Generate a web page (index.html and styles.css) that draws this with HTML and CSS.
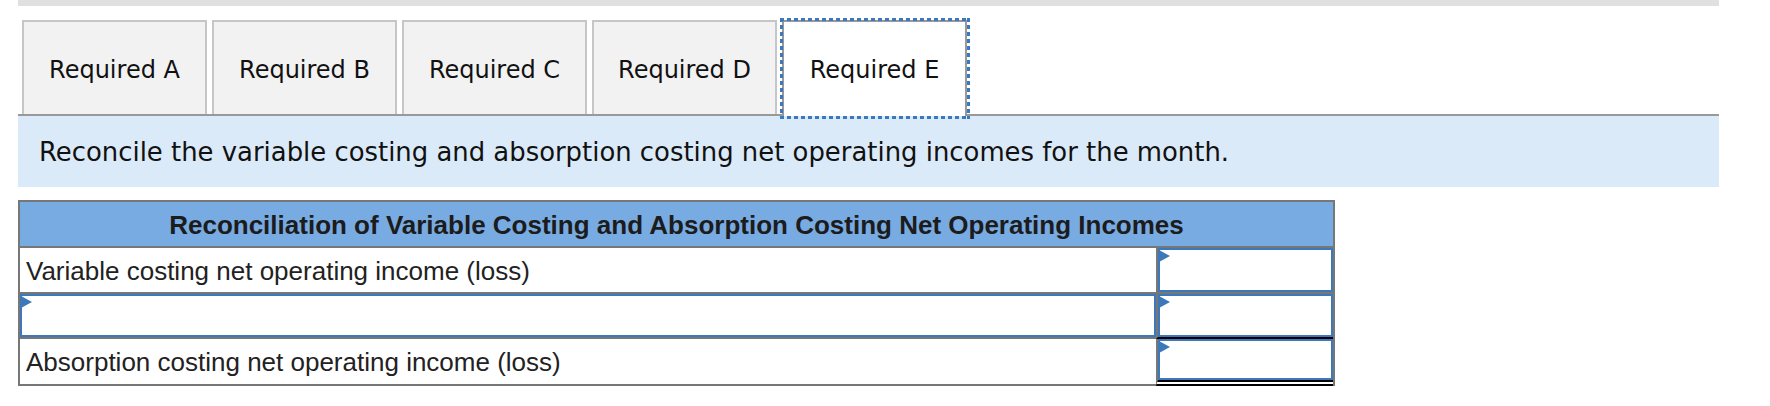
FILE: index.html
```html
<!DOCTYPE html>
<html>
<head>
<meta charset="utf-8">
<link rel="stylesheet" href="styles.css">
</head>
<body>
<div class="page">
  <div class="topbar"></div>
  <div class="tabs">
    <div class="tab">Required A</div>
    <div class="tab">Required B</div>
    <div class="tab">Required C</div>
    <div class="tab">Required D</div>
    <div class="tab tab-active">Required E</div>
  </div>
  <div class="prompt">Reconcile the variable costing and absorption costing net operating incomes for the month.</div>
  <div class="recon">
    <div class="recon-head">Reconciliation of Variable Costing and Absorption Costing Net Operating Incomes</div>
    <div class="recon-row">
      <div class="cell label">Variable costing net operating income (loss)</div>
      <div class="cell amount"><div class="field"><span class="marker"></span></div></div>
    </div>
    <div class="recon-row row-sub">
      <div class="cell label"><div class="field"><span class="marker"></span></div></div>
      <div class="cell amount"><div class="field"><span class="marker"></span></div></div>
    </div>
    <div class="recon-row row-total">
      <div class="cell label">Absorption costing net operating income (loss)</div>
      <div class="cell amount"><div class="field"><span class="marker"></span></div></div>
    </div>
  </div>
</div>
</body>
</html>
```
FILE: styles.css
```css
html, body {
  margin: 0;
  padding: 0;
  background: #ffffff;
}

.page {
  margin-left: 18px;
  width: 1701px;
}

.topbar {
  height: 6px;
  background: #e0e0e0;
}

.tabs {
  display: flex;
  gap: 5px;
  margin-top: 14px;
  padding-left: 4px;
  position: relative;
  z-index: 1;
}

.tab {
  box-sizing: border-box;
  width: 185px;
  height: 94px;
  border: 2px solid #c6c6c6;
  border-bottom: none;
  background: #f2f2f2;
  display: flex;
  align-items: center;
  justify-content: center;
  font-family: "DejaVu Sans", Verdana, sans-serif;
  font-size: 24px;
  color: #111;
  padding-top: 4px;
}

.tab-active {
  background: #ffffff;
  border-color: #999999;
  height: 96px;
  margin-bottom: -2px;
  position: relative;
  padding-bottom: 2px;
}

.tab-active::after {
  content: "";
  position: absolute;
  top: -4px;
  left: -4px;
  right: -5px;
  bottom: -3px;
  background:
    repeating-linear-gradient(90deg, #3a78c0 0 4px, transparent 4px 7px) left top / 100% 3px no-repeat,
    repeating-linear-gradient(90deg, #3a78c0 0 4px, transparent 4px 7px) left bottom / 100% 3px no-repeat,
    repeating-linear-gradient(180deg, #3a78c0 0 4px, transparent 4px 7px) left top / 3px 100% no-repeat,
    repeating-linear-gradient(180deg, #3a78c0 0 4px, transparent 4px 7px) right top / 3px 100% no-repeat;
}

.prompt {
  box-sizing: border-box;
  height: 73px;
  border-top: 2px solid #999999;
  background: #dbeaf8;
  padding-left: 21px;
  padding-top: 1px;
  display: flex;
  align-items: center;
  font-family: "DejaVu Sans", Verdana, sans-serif;
  font-size: 25.9px;
  color: #111;
}

.recon {
  box-sizing: border-box;
  width: 1317px;
  margin-top: 13px;
  border: 2px solid #777777;
  border-bottom: none;
  font-family: "Liberation Sans", Arial, sans-serif;
  font-size: 26px;
  color: #222;
}

.recon-head {
  box-sizing: border-box;
  height: 46px;
  padding-top: 2px;
  background: #78abe2;
  border-bottom: 2px solid #777777;
  display: flex;
  align-items: center;
  justify-content: center;
  font-weight: bold;
  color: #1c1c1c;
}

.recon-row {
  display: grid;
  grid-template-columns: 1136px 175px;
}

.cell {
  box-sizing: border-box;
  height: 46px;
  border-bottom: 2px solid #777777;
  display: flex;
  align-items: center;
}

.label {
  padding-left: 6px;
  padding-top: 2px;
}

.amount {
  border-left: 2px solid #777777;
  width: 177px;
  align-items: stretch;
  padding-top: 0;
}

.field {
  box-sizing: border-box;
  flex: 1;
  align-self: stretch;
  border: 2.5px solid #3d79ba;
  background: #fff;
}

.marker {
  display: block;
  width: 0;
  height: 0;
  border-left: 11px solid #3d79ba;
  border-top: 6.5px solid transparent;
  border-bottom: 6.5px solid transparent;
  margin-left: -1px;
}

.row-sub .cell {
  height: 45px;
}

.row-sub .label {
  padding-left: 0;
  padding-top: 0;
  align-items: stretch;
}

.row-sub .amount {
  border-bottom-color: #000000;
}

.row-total .cell {
  height: 47px;
}

.row-total .amount {
  border-bottom: 6px double #000000;
}
```
